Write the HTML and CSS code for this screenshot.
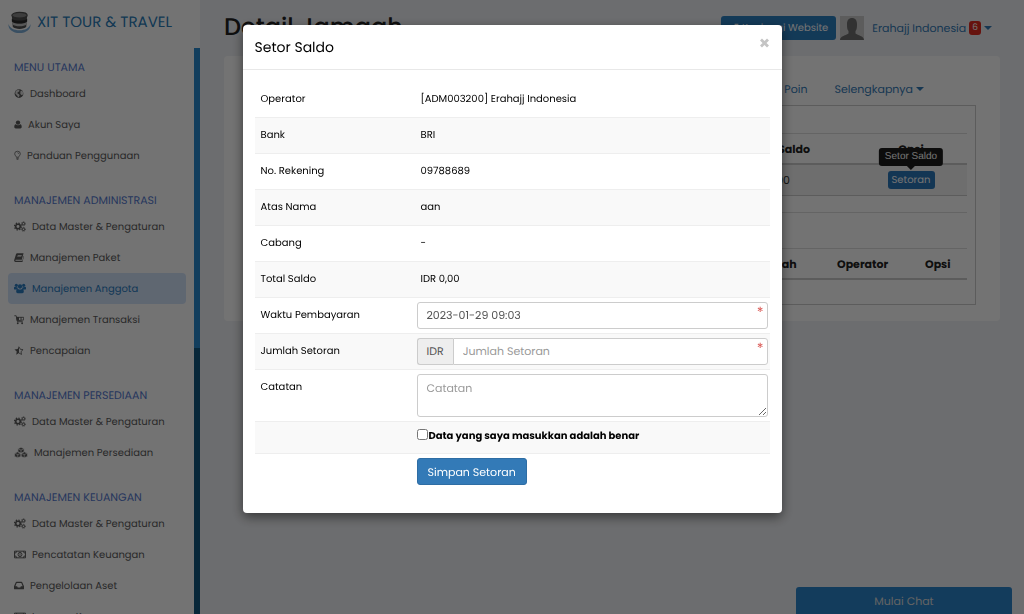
FILE: index.html
```html
<!DOCTYPE html>
<html lang="id">
<head>
<meta charset="utf-8">
<meta name="viewport" content="width=device-width, initial-scale=1">
<title>Setor Saldo</title>
<link rel="stylesheet" href="styles.css">
</head>
<body>
<svg class="sprite" aria-hidden="true">
  <symbol id="i-gears" viewBox="0 0 18 16">
    <circle cx="6" cy="8" r="3.4" fill="none" stroke="currentColor" stroke-width="2.4"/>
    <circle cx="6" cy="8" r="5.2" fill="none" stroke="currentColor" stroke-width="1.8" stroke-dasharray="2.1 1.98"/>
    <circle cx="14.2" cy="3.8" r="1.8" fill="none" stroke="currentColor" stroke-width="1.5"/>
    <circle cx="14.2" cy="3.8" r="2.9" fill="none" stroke="currentColor" stroke-width="1.2" stroke-dasharray="1.3 .98"/>
    <circle cx="14.2" cy="12.2" r="1.8" fill="none" stroke="currentColor" stroke-width="1.5"/>
    <circle cx="14.2" cy="12.2" r="2.9" fill="none" stroke="currentColor" stroke-width="1.2" stroke-dasharray="1.3 .98"/>
  </symbol>
  <symbol id="i-money" viewBox="0 0 18 16">
    <path fill="none" stroke="currentColor" stroke-width="1.500" d="M.8 3h16.400v10H.8zM.8 6Q4 6 4 3M17.200 6Q14 6 14 3M.8 10Q4 10 4 13M17.200 10Q14 10 14 13"/>
    <ellipse cx="9" cy="8" rx="2.900" ry="3.200" fill="none" stroke="currentColor" stroke-width="1.400"/>
    <path d="M9 6v4" stroke="currentColor" stroke-width="1.200"/>
  </symbol>
</svg>

<div class="app">
  <aside class="sidebar">
    <a class="brand" href="#">
      <svg class="brand-logo" viewBox="0 0 24 24" aria-hidden="true">
        <path d="M.5 13.500C0 19 5 23 12 23s12-4 11.500-9.500C22 18 18 20 12 20S2 18 .5 13.500z" fill="#7fb0da"/>
        <path d="M4 5l1 11.500c2 3 12 3 14 0L20 5z" fill="#505050"/>
        <ellipse cx="12" cy="4.500" rx="8" ry="3" fill="#8a8a8a" stroke="#505050" stroke-width="1.200"/>
        <path d="M4 8c2 2.600 14 2.600 16 0v3c-2 2.600-14 2.600-16 0z" fill="#2c2c2c"/>
        <path d="M4.500 11.500c2 2.500 13 2.500 15 0l-.3 2.500c-2 2.500-12 2.500-14.400 0z" fill="#c4c4c4"/>
      </svg>
      <span>XIT TOUR &amp; TRAVEL</span>
    </a>
    <div class="sidebar-body">
      <nav class="menu">
        <h2>MENU UTAMA</h2>
        <a href="#"><svg viewBox="0 0 16 16"><circle cx="8" cy="8" r="7" fill="currentColor"/><path d="M3 3.500l4-1.500 2 1-1 2-2 .5L5.500 8l2.500 1 1 2-2 3.200L5 11 2 8zM10.500 4l2.500-.5L15 7l-1 3-2.500.5L10 8z" fill="#fff" opacity=".8"/></svg>Dashboard</a>
        <a href="#"><svg class="w11" viewBox="0 0 14 16"><circle cx="7" cy="4.600" r="3.800" fill="currentColor"/><path d="M3 7.500C1 8 .5 10 .5 12.500.5 14 1.500 15 3 15h8c1.500 0 2.500-1 2.500-2.500 0-2.500-.5-4.500-2.500-5-2.200 2.200-5.800 2.200-8 0z" fill="currentColor"/></svg>Akun Saya</a>
        <a href="#"><svg class="w9" viewBox="0 0 12 16"><path d="M4 11c0-2-2.800-3-2.800-6a4.800 4.300 0 0 1 9.600 0c0 3-2.800 4-2.800 6zM4 12.800h4M4.500 14.600h3M6 3.200c1.200 0 2 .7 2 1.700" fill="none" stroke="currentColor" stroke-width="1.300"/></svg>Panduan Penggunaan</a>

        <h2>MANAJEMEN ADMINISTRASI</h2>
        <a href="#"><svg class="w14"><use href="#i-gears"/></svg>Data Master &amp; Pengaturan</a>
        <a href="#"><svg viewBox="0 0 16 16"><path d="M5 1h10.300L12.500 11.500H3c-1.200 0-1.200 1.700 0 1.700h10.300L15.500 5l.5 1-2.500 9H2.500C.8 15-.2 13.500.3 12L3.300 2.500C3.600 1.500 4.200 1 5 1zM6 4l-.3 1h6.500l.3-1zM5.300 6.300l-.3 1h6.500l.3-1z" fill="currentColor" fill-rule="evenodd"/></svg>Manajemen Paket</a>
        <a class="active" href="#"><svg class="w14" viewBox="0 0 18 16"><g fill="currentColor"><circle cx="3.500" cy="3.300" r="2.300"/><circle cx="14.500" cy="3.300" r="2.300"/><circle cx="9" cy="5" r="3.200"/><path d="M0 9V6.500C0 5.500 1 5.300 1.500 5.500c1 .8 2.500.8 3.500.4 0 1.300.4 2 1 2.600L4 9.500H1zM18 9V6.500c0-1-1-1.200-1.500-1-1 .8-2.500.8-3.500.4 0 1.300-.4 2-1 2.600l2 1h3zM5.800 8.200C3.700 8.500 3.300 10.500 3.300 13c0 1.300 1 2.200 2.200 2.200h7c1.300 0 2.200-.9 2.200-2.200 0-2.500-.4-4.500-2.500-4.800-1.800 1.700-4.600 1.700-6.400 0z"/></g></svg>Manajemen Anggota</a>
        <a href="#"><svg viewBox="0 0 16 16"><path d="M.5 2h3l2 9.500h8.500M4 4.500h11.500v4.200L5 10z" fill="none" stroke="currentColor" stroke-width="1.400"/><path d="M4 4h4v5.500H5zM10.500 4H12v5h-1.500z" fill="currentColor"/><circle cx="6" cy="14" r="1.500" fill="currentColor"/><circle cx="13" cy="14" r="1.500" fill="currentColor"/></svg>Manajemen Transaksi</a>
        <a href="#"><svg viewBox="0 0 16 16"><path d="M8 1v11l-4.500 2.700.9-5L.7 6.200l5.100-.7z" fill="currentColor"/><path d="M8 2l2 4 4.500.6-3.300 3.200.8 4.500L8 12" fill="none" stroke="currentColor" stroke-width="1.300"/></svg>Pencapaian</a>

        <h2>MANAJEMEN PERSEDIAAN</h2>
        <a href="#"><svg class="w14"><use href="#i-gears"/></svg>Data Master &amp; Pengaturan</a>
        <a href="#"><svg class="w16" viewBox="0 0 20 16"><g fill="currentColor" stroke="#fff" stroke-width=".9" stroke-linejoin="round"><path d="M10 .5l4.500 2v4.700L10 9.300 5.500 7.200V2.500zM5.300 7l4.500 2v4.700l-4.500 2-4.700-2V9zM14.700 7l4.700 2v4.700l-4.700 2-4.500-2V9z"/><path d="M5.500 2.500l4.500 2 4.500-2M10 4.500v4.800M.6 9l4.700 2 4.500-2 4.900 2 4.700-2M5.300 11v4.700M14.700 11v4.700" fill="none"/></g></svg>Manajemen Persediaan</a>

        <h2>MANAJEMEN KEUANGAN</h2>
        <a href="#"><svg class="w14"><use href="#i-gears"/></svg>Data Master &amp; Pengaturan</a>
        <a href="#"><svg class="w14"><use href="#i-money"/></svg>Pencatatan Keuangan</a>
        <a href="#"><svg viewBox="0 0 16 16"><path d="M4 2h8c.7 0 1 .3 1.300 1L16 9v4c0 .7-.4 1-1 1H1c-.6 0-1-.3-1-1V9l2.700-6C3 2.300 3.300 2 4 2zm.3 1.900L2.200 9H5l1 2h4l1-2h2.800l-2.100-5.100z" fill="currentColor" fill-rule="evenodd"/></svg>Pengelolaan Aset</a>
        <a href="#"><svg class="w14"><use href="#i-money"/></svg>Laporan Keuangan</a>
      </nav>
      <div class="scroll-track"><div class="scroll-thumb"></div></div>
    </div>
  </aside>

  <main class="main">
    <header class="topbar">
      <h1>Detail Jamaah</h1>
      <div class="topbar-side">
        <a class="visit" href="#"><svg viewBox="0 0 16 16" aria-hidden="true"><path d="M8 4H2v10h10V9M9 2h5v5M14 2L7 9" fill="none" stroke="currentColor" stroke-width="2"/></svg>Kunjungi Website</a>
        <svg class="avatar" viewBox="0 0 24 24" role="img" aria-label="Foto profil"><path d="M0 0h24v24H0z" fill="#cdcdcd"/><path d="M0 24c0-4 5-4 8.500-6.500V15C7 13.500 7 11 7 8c0-4 2-6 5-6s5 2 5 6c0 3 0 5.500-1.500 7v2.500C19 20 24 20 24 24z" fill="#707070"/></svg>
        <a class="account" href="#">Erahajj Indonesia <span class="badge">6</span><span class="caret"></span></a>
      </div>
    </header>

    <section class="card">
      <nav class="tabs">
        <a href="#">Poin</a>
        <a href="#">Selengkapnya<span class="caret"></span></a>
      </nav>
      <div class="panel">
        <table class="list balance">
          <thead><tr><th></th><th>Total Saldo</th><th class="center">Opsi</th></tr></thead>
          <tbody><tr><td></td><td>IDR 0,00</td><td class="center"><span class="tip-anchor"><button class="btn-xs" type="button">Setoran</button><span class="tooltip" role="tooltip">Setor Saldo</span></span></td></tr></tbody>
        </table>
        <hr>
        <table class="list history">
          <thead><tr><th></th><th>Jumlah</th><th>Operator</th><th>Opsi</th></tr></thead>
        </table>
      </div>
    </section>
  </main>
</div>

<button class="chat" type="button">Mulai Chat</button>

<div class="backdrop">
  <form class="modal" role="dialog" aria-labelledby="modal-title">
    <div class="modal-head">
      <h2 id="modal-title">Setor Saldo</h2>
      <button class="close" type="button" aria-label="Tutup"><svg viewBox="0 0 10 10"><path d="M1.500 1.500l7 7M8.500 1.500l-7 7" stroke="currentColor" stroke-width="2.800"/></svg></button>
    </div>
    <div class="modal-body">
      <table class="fields">
        <tr><th>Operator</th><td class="value">[ADM003200] Erahajj Indonesia</td></tr>
        <tr><th>Bank</th><td class="value">BRI</td></tr>
        <tr><th>No. Rekening</th><td class="value">09788689</td></tr>
        <tr><th>Atas Nama</th><td class="value">aan</td></tr>
        <tr><th>Cabang</th><td class="value">-</td></tr>
        <tr><th>Total Saldo</th><td class="value">IDR 0,00</td></tr>
        <tr><th><label for="time">Waktu Pembayaran</label></th><td><div class="control required"><input id="time" type="text" value="2023-01-29 09:03"></div></td></tr>
        <tr><th><label for="amount">Jumlah Setoran</label></th><td><div class="control required"><span class="addon">IDR</span><input id="amount" type="text" placeholder="Jumlah Setoran"></div></td></tr>
        <tr><th><label for="note">Catatan</label></th><td><textarea id="note" placeholder="Catatan"></textarea></td></tr>
        <tr><th></th><td><label class="check"><input type="checkbox">Data yang saya masukkan adalah benar</label></td></tr>
        <tr><th></th><td><button class="submit" type="submit">Simpan Setoran</button></td></tr>
      </table>
    </div>
  </form>
</div>
</body>
</html>
```
FILE: styles.css
```css
* { box-sizing: border-box; }

body {
  margin: 0;
  height: 100vh;
  overflow: hidden;
  background: #f0f2f6;
  color: #333;
  font: 11px/16px Poppins, Inter, sans-serif;
  text-rendering: geometricPrecision;
}

a { color: #337ab7; text-decoration: none; }
button, input, textarea { font: inherit; color: inherit; text-rendering: inherit; }
h1, h2 { margin: 0; font-weight: 400; }
.sprite { position: absolute; width: 0; height: 0; }

.app { display: flex; height: 100vh; }

/* Sidebar */
.sidebar {
  display: flex;
  flex-direction: column;
  flex: 0 0 200px;
  background: #fff;
}
.brand {
  display: flex;
  align-items: center;
  gap: 6px;
  flex: 0 0 48px;
  padding: 0 8px 3px;
  color: #2a7cb8;
  font-size: 15px;
  white-space: nowrap;
}
.brand-logo { width: 23px; height: 23px; }
.sidebar-body { display: flex; flex: 1; min-height: 0; }
.menu { flex: 1; padding: 9px 8px 0; overflow: hidden; white-space: nowrap; }
.menu h2 {
  margin: 19px 6px 0;
  color: #5479d0;
  font-size: 11px;
  line-height: 21px;
}
.menu h2:first-child { margin-top: 0; }
.menu a {
  display: flex;
  align-items: center;
  gap: 6px;
  height: 31px;
  padding: 0 6px;
  border-radius: 4px;
  color: #5c5c5c;
  font-size: 10px;
}
.menu .active { background: #d3e4fb; color: #2a7cc0; }
.menu svg { width: 10px; height: 11px; flex: none; }
.menu .w9 { width: 7px; }
.menu .w11 { width: 8px; }
.menu .w14 { width: 12px; }
.menu .w16 { width: 14px; }
.scroll-track { width: 6px; background: #12587f; }
.scroll-thumb { height: 53%; background: #2889cf; }

/* Page */
.main { flex: 1; min-width: 0; padding: 0 24px; }
.topbar {
  display: flex;
  align-items: center;
  justify-content: space-between;
  height: 56px;
}
.topbar h1 { font-size: 24px; font-weight: 500; line-height: 32px; color: #222; }
.topbar-side { display: flex; align-items: center; gap: 4px; padding-right: 8px; }
.visit {
  display: flex;
  align-items: center;
  gap: 3px;
  height: 24px;
  padding: 0 8px;
  border-radius: 3px;
  background: #2c80c2;
  color: #fff;
  font-size: 10px;
}
.visit svg { width: 10px; height: 10px; }
.avatar { width: 24px; height: 24px; }
.account { display: flex; align-items: center; gap: 3px; padding-left: 4px; }
.badge {
  padding: 0 3px;
  border-radius: 3px;
  background: #e32a20;
  color: #fff;
  font-size: 9px;
  line-height: 14px;
}
.caret {
  border: 4px solid transparent;
  border-top-color: currentColor;
  border-bottom: 0;
}

.card { padding: 17px 24px 16px; border-radius: 4px; background: #fff; }
.tabs {
  display: flex;
  justify-content: flex-end;
  gap: 27px;
  padding: 8px 52px 8px 0;
}
.tabs a { display: flex; align-items: center; gap: 3px; }
.panel { padding: 27px 8px 24px; border: 1px solid #ccc; }
.panel hr { margin: 16px 0 35px; border: 0; border-top: 1px solid #ddd; }
.list {
  width: 100%;
  table-layout: fixed;
  border-collapse: collapse;
  text-align: left;
}
.list th {
  padding: 7px 6px 6px;
  border-top: 1px solid #ddd;
  border-bottom: 2px solid #ccc;
  color: #222;
  font-weight: 700;
}
.list td { padding: 6px; border-bottom: 1px solid #ccc; background: #f4f4f4; }
.list .center { text-align: center; }
.balance th:nth-child(2) { width: 114px; }
.balance th:nth-child(3) { width: 112px; }
.history th:nth-child(2) { width: 84px; }
.history th:nth-child(3) { width: 88px; }
.history th:nth-child(4) { width: 48px; }
.tip-anchor { position: relative; display: block; width: max-content; margin: 0 auto; }
.btn-xs {
  display: block;
  height: 18px;
  padding: 0 4px;
  border: 0;
  border-radius: 3px;
  background: #2c78ba;
  color: #fff;
  font-size: 10px;
}
.tooltip {
  position: absolute;
  left: 50%;
  bottom: 23px;
  padding: 1px 6px;
  transform: translateX(-50%);
  border-radius: 3px;
  background: #1c1c1c;
  color: #fff;
  font-family: "Liberation Sans", Arial, sans-serif;
  font-size: 10px;
  white-space: nowrap;
}
.tooltip::after {
  content: "";
  position: absolute;
  top: 100%;
  left: 50%;
  margin-left: -4px;
  border: 4px solid transparent;
  border-top-color: #1c1c1c;
  border-bottom: 0;
}

.chat {
  position: fixed;
  right: 12px;
  bottom: 0;
  width: 216px;
  height: 27px;
  border: 0;
  border-radius: 3px 3px 0 0;
  background: #2c86cc;
  color: #ddd;
}

/* Dialog */
.backdrop {
  position: fixed;
  inset: 0;
  padding: 25px 12px;
  background: rgba(0, 0, 0, .55);
}
.modal {
  max-width: 539px;
  margin: 0 auto;
  border-radius: 4px;
  background: #fff;
  box-shadow: 0 4px 12px rgba(0, 0, 0, .5);
  color: #000;
}
.modal-head {
  display: flex;
  justify-content: space-between;
  align-items: center;
  height: 45px;
  padding: 0 12px;
  border-bottom: 1px solid #e8e8e8;
}
.modal-head h2 { font-size: 14px; }
.close { padding: 0; border: 0; background: none; color: #c4c4c4; line-height: 0; }
.close svg { width: 11px; height: 10px; margin-bottom: 8px; }
.modal-body { padding: 12px 12px 24px; }
.fields { width: 100%; border-collapse: collapse; font-size: 10px; }
.fields tr:nth-child(even) { background: #f9f9f9; }
.fields tr:nth-child(n + 2) { border-top: 1px solid #eee; }
.fields th {
  width: 160px;
  padding: 9px 6px;
  font-weight: 400;
  text-align: left;
  vertical-align: top;
}
.fields td { padding: 4px 2px; vertical-align: top; }
.fields .value { padding: 9px 6px 10px; }
.control { position: relative; display: flex; }
.control input, textarea {
  display: block;
  width: 100%;
  min-width: 0;
  height: 27px;
  padding: 0 9px;
  border: 1px solid #ccc;
  border-radius: 3px;
  background: #fff;
  color: #555;
  font-size: 11px;
}
textarea { height: 43px; padding: 5px 9px; resize: vertical; }
::placeholder { color: #999; opacity: 1; }
.required::after {
  content: "*";
  position: absolute;
  top: 2px;
  right: 4px;
  color: #d9534f;
  font-size: 14px;
}
.addon {
  padding: 0 9px;
  border: 1px solid #ccc;
  border-right: 0;
  border-radius: 3px 0 0 3px;
  background: #eee;
  color: #555;
  font-size: 11px;
  line-height: 25px;
}
.addon + input { border-radius: 0 3px 3px 0; }
.check { display: flex; gap: 1px; padding: 2px 0 5px; font-weight: 700; }
.check input { width: 11px; height: 11px; margin: 1px 0 0; }
.submit {
  height: 27px;
  padding: 0 10px;
  border: 1px solid #2e6da4;
  border-radius: 3px;
  background: #337ab7;
  color: #fff;
  font-size: 11px;
}
```
